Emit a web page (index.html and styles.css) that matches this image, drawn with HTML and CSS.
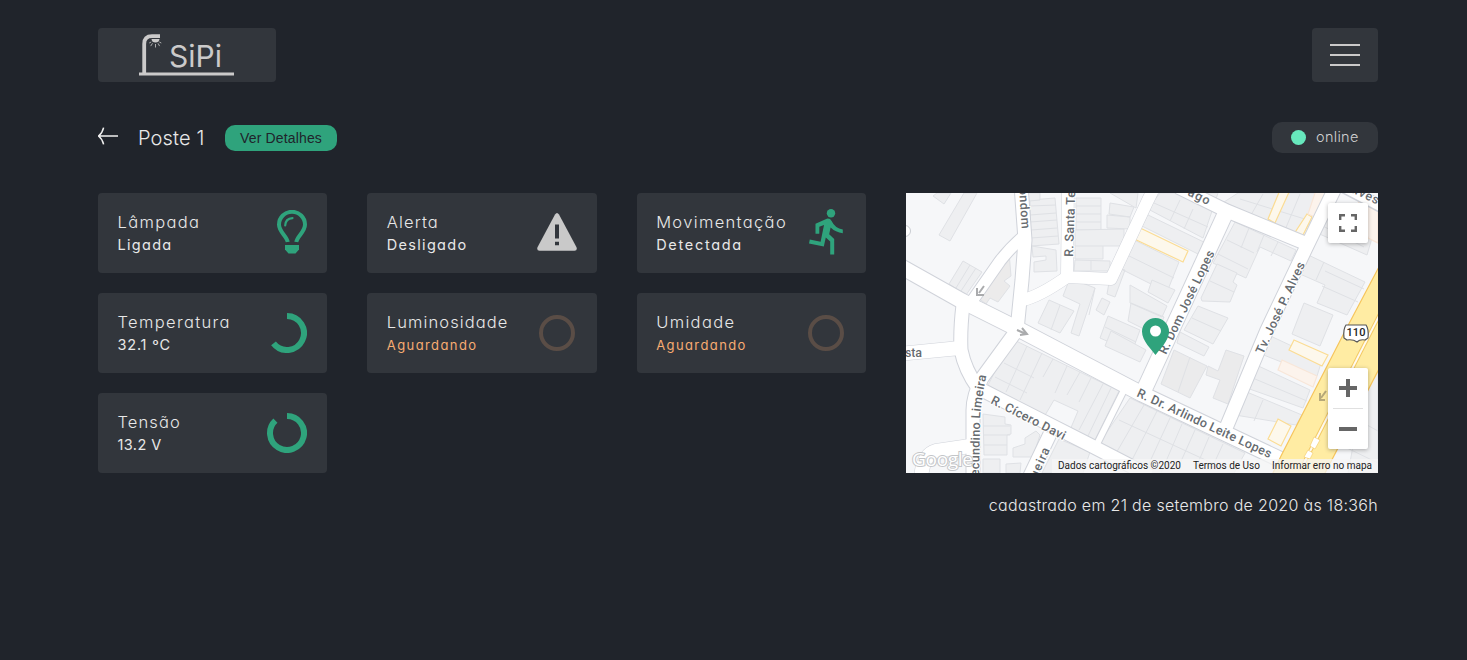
FILE: index.html
```html
<!DOCTYPE html>
<html lang="pt-BR">
<head>
<meta charset="utf-8">
<title>SiPi - Poste 1</title>
<link rel="stylesheet" href="styles.css">
</head>
<body>
<div class="page">
  <header class="header">
    <a class="logo" aria-label="SiPi">
      <svg class="logo-mark" width="96" height="46" viewBox="0 0 96 46">
        <path d="M0 41h95" stroke="#cbcaca" stroke-width="3.2"/>
        <path d="M5.200 41V11Q5.200 3.200 13 3.200H21" fill="none" stroke="#cbcaca" stroke-width="3.800"/>
        <path d="M12.500 6h8q-.3 3.500-4 3.500t-4-3.500z" fill="#cbcaca"/>
        <path d="M12.200 9l-2 1M13.500 10.300l-1.800 2.800M16.500 11v3.500M19 10.300l1.600 2.800M20.300 9l2 1" stroke="#cbcaca" stroke-width=".8"/>
        <text class="logo-text" x="30" y="34" textLength="53" lengthAdjust="spacing">SiPi</text>
      </svg>
    </a>
    <button class="menu" aria-label="Menu"><i></i><i></i><i></i></button>
  </header>

  <div class="titlebar">
    <svg class="back" width="20" height="20" viewBox="0 0 20 20" fill="none" stroke="#f0f0f0" stroke-width="1.500"><path d="M0 10h20M5.600 1.600Q4.400 7 .5 10Q4.400 13 5.600 18.400"/></svg>
    <h1 class="title">Poste 1</h1>
    <button class="details">Ver Detalhes</button>
    <span class="status"><i class="dot"></i><span class="status-text">online</span></span>
  </div>

  <main class="content">
    <section class="cards">
      <article class="card">
        <div><h2 class="name">Lâmpada</h2><p class="value">Ligada</p></div>
        <svg class="bulb" width="30" height="44" viewBox="0 0 30 44"><path d="M10.700 32C9.500 25.500 2 22 2 14.500a13 12.700 0 0 1 26 0C28 22 20.500 25.500 19.300 32" fill="none" stroke="#2fa37c" stroke-width="4"/><path d="M8.200 15.500q.3-6.800 7.300-7.300" fill="none" stroke="#2fa37c" stroke-width="2.200" stroke-linecap="round"/><path d="M8 35h14v4.500L18.500 43.500h-7L8 39.500z" fill="#2fa37c"/></svg>
      </article>
      <article class="card">
        <div><h2 class="name tight">Alerta</h2><p class="value">Desligado</p></div>
        <svg class="alert" width="40" height="38" viewBox="0 0 40 38"><path d="M18 1.600q2-3 4 0l17.500 32.700q1.100 3.200-2 3.500h-35q-3.100-.3-2-3.500z" fill="#c9c9c9"/><path d="M18 11.500h4V25.500h-4zM18 28.700h4v3.600h-4z" fill="#32363c"/></svg>
      </article>
      <article class="card">
        <div><h2 class="name">Movimentação</h2><p class="value wide">Detectada</p></div>
        <svg class="runner" width="34" height="46" viewBox="0 0 34 46" fill="#2fa37c"><circle cx="22" cy="4.300" r="4.200"/><path d="M6.500 14.800L17.800 9.700Q21 9 22.600 12Q26 19.300 33.800 20.400V24.200Q26.500 23.500 21.600 18.600L20.200 25.200L25.200 30V45.500H21.200V32.500L16.800 28.600L14.800 37.600L0 34.600L.8 30.600L11.600 32.800L15 16L10.300 17.800V24.700H6.500z"/></svg>
      </article>
      <article class="card">
        <div><h2 class="name">Temperatura</h2><p class="value num">32.1 ºC</p></div>
        <svg width="40" height="40" viewBox="0 0 40 40"><path d="M20 3A17 17 0 1 1 6.500 30.400" fill="none" stroke="#2fa37c" stroke-width="6"/></svg>
      </article>
      <article class="card">
        <div><h2 class="name tight">Luminosidade</h2><p class="value waiting">Aguardando</p></div>
        <svg width="40" height="40" viewBox="0 0 40 40"><circle cx="20" cy="20" r="16" fill="none" stroke="#5a4d46" stroke-width="4"/></svg>
      </article>
      <article class="card">
        <div><h2 class="name">Umidade</h2><p class="value waiting">Aguardando</p></div>
        <svg width="40" height="40" viewBox="0 0 40 40"><circle cx="20" cy="20" r="16" fill="none" stroke="#5a4d46" stroke-width="4"/></svg>
      </article>
      <article class="card">
        <div><h2 class="name tight">Tensão</h2><p class="value num volts">13.2 V</p></div>
        <svg width="40" height="40" viewBox="0 0 40 40"><path d="M20 3A17 17 0 1 1 8.400 7.600" fill="none" stroke="#2fa37c" stroke-width="6"/></svg>
      </article>
    </section>

    <aside class="side">
      <div class="map">
        <svg class="map-canvas" width="472" height="280" viewBox="906 193 472 280">
          <rect x="906" y="193" width="472" height="280" fill="#f6f7f9"/>
          <defs>
            <g id="roads" fill="none" stroke-linejoin="round">
              <path stroke-width="15" d="M898 265L962 301L1022 331L1142 394L1290 464"/>
              <path stroke-width="13" d="M1021 185L1025 240L1022 280L1017 330L982 378Q973 396 973 410V485"/>
              <path stroke-width="13" d="M963 305Q960 330 961 350Q965 370 978 388L1092 446L1150 476"/>
              <path stroke-width="14" d="M898 354L960 348M970 446L936 451Q922 455 921 480"/>
              <path stroke-width="13" d="M1050 434L1028 480"/>
              <path stroke-width="6" d="M1124 390L1096 446"/>
              <path stroke-width="11" d="M1025 235Q1010 248 1000 261L970 304"/>
              <path stroke-width="12" d="M1068 185L1067 276M1023 300Q1040 296 1067 277L1111 279L1148 200L1155 186"/>
              <path stroke-width="15" d="M1227 210L1145 388"/>
              <path stroke-width="13" d="M1178 187L1227 211L1312 246M1336 186L1306 248L1267 330L1226 428"/>
              <path stroke-width="10" d="M1338 184L1388 210"/>
            </g>
          </defs>

          <!-- buildings -->
          <g fill="#eeeff1" stroke="#dfe1e5" stroke-width="1">
            <path d="M964 193L939 235L950 241L977 193zM933 196L944 204L951 193H937z"/>
            <path d="M949 284L963 261L982 272L966 295zM956 288L970 265M961 291L976 268"/>
            <path d="M977 297L1009 252L1011 276L1004 281L1010 286L998 302L990 298L986 304z" fill="#ecebeb"/>
            <path d="M1030 200L1055 198L1059 244L1031 246zM1030 206L1056 205M1030 215L1056 213M1030 222L1057 220M1031 230L1057 228M1031 238L1058 236M1032 246L1056 250L1057 271L1034 272V262L1046 260V256L1033 257z"/>
            <path d="M1028 193H1040V200L1029 201zM1076 198H1101V230H1076zM1076 206H1101M1076 214H1101M1076 222H1101"/>
            <path d="M1075 230L1124 229V246H1103V259H1075zM1075 246H1103M1075 260L1110 261V271H1074zM1091 260V270M1107 215L1130 217V229L1107 228zM1110 203L1134 207L1130 217L1109 214zM1110 193H1138L1136 208z"/>
            <path d="M1070 278L1095 288L1079 336L1071 333L1080 304L1063 296zM1095 288L1089 315M1049 300L1074 311L1060 333L1038 323zM1060 305L1051 330M1102 298L1110 302L1104 315L1096 310zM1108 316L1140 330L1132 352L1100 338zM1105 327L1136 342"/>
            <path d="M1126 236L1179 262L1167 292L1119 268zM1121 252L1174 278M1146 214L1212 246L1206 258L1140 225zM1160 193H1218L1203 238L1148 209zM1180 200L1170 221M1193 209L1184 229M1154 203L1208 227M1112 266L1125 270L1115 297L1107 294z"/>
            <path d="M1130 285L1167 306L1162 317L1130 303zM1131 303L1164 317L1156 335L1128 321zM1152 280L1175 290L1168 303L1148 292zM1111 331L1146 350L1140 362L1105 346z"/>
            <path d="M1235 222L1296 250L1291 261L1260 247L1246 278L1213 263zM1227 240L1254 253M1249 228L1241 248M1264 235L1257 252M1278 242L1271 256M1218 254L1248 269"/>
            <path d="M1217 264L1237 273L1233 282L1237 285L1230 302L1202 301L1201 298zM1210 281L1234 292M1198 306L1228 318L1213 344L1184 330zM1192 318L1221 331M1180 332L1209 347L1204 356L1177 343z"/>
            <path d="M1238 193H1318L1300 236L1224 202zM1263 194L1251 215M1282 193L1268 225M1300 194L1285 230M1240 199L1308 220"/>
            <path d="M1318 212L1372 238L1367 255L1306 228zM1313 221L1364 247M1302 252L1365 282L1347 315L1317 303L1325 285L1300 274zM1324 262L1316 280M1325 271L1364 289M1322 286L1358 302"/>
            <path d="M1304 303L1333 315L1320 346L1292 334z"/>
            <path d="M1174 350L1207 366L1190 398L1161 384zM1190 357L1178 392M1208 366L1218 371L1226 350L1244 356L1228 404L1213 398L1220 380L1206 375z" fill="#ebebec"/>
            <path d="M1264 333L1322 360L1317 376L1256 352zM1252 363L1310 390L1303 408L1244 387zM1248 376L1307 401M1242 390L1302 415L1296 425L1235 415L1233 418zM1263 400L1254 421"/>
            <path d="M1012 339L1119 391L1094 442L1070 430L1078 411L1054 400L1044 417L988 385zM1027 346L1006 392M1042 353L1020 400M1053 359L1043 377M1067 366L1055 393M1080 372L1067 395M1091 378L1079 402M1103 384L1079 430M1111 388L1087 438M1004 363L1034 378M995 377L1027 393"/>
            <path d="M1130 398L1245 453L1234 473H1150L1098 445zM1144 405L1115 455M1157 411L1132 460M1170 418L1147 468M1182 424L1161 473M1195 430L1178 468M1209 437L1195 470M1223 444L1211 470M1119 420L1225 469"/>
            <path d="M983 414L1005 417V424L1011 425V434L1007 435V455H984zM983 426H1010M984 435H1010M984 445H1007M1036 431L1040 435L1033 457H1013V448L1025 444V438zM983 459H1000V473H983zM1006 464L1021 463L1020 473H1006zM1059 439L1090 452L1083 473H1042z"/>
            <path d="M1370 355L1378 358V473H1348zM1345 447L1378 463M1356 419L1378 431"/>
          </g>
          <g fill="#fdf8ec" stroke="#fbdc93" stroke-width="1.200">
            <path d="M1136 226L1188 251L1183 262L1130 237zM1280 190L1268 219L1275 223L1290 190zM1307 214L1312 217L1302 237L1294 234zM1294 340L1328 355L1322 366L1289 350zM1278 419L1291 426L1281 446L1268 439z"/>
            <path d="M1316 190L1308 214L1317 218L1332 190zM1282 360L1317 376L1313 387L1278 370zM1358 200L1378 208V243L1368 238z" fill="#fcf3ec" stroke="#f8e6d8"/>
          </g>

          <!-- streets: casing below, surface above -->
          <g fill="none" stroke="#d0d3da" stroke-linejoin="round">
            <path stroke-width="17" d="M898 265L962 301L1022 331L1142 394L1290 464M1227 210L1145 388"/>
            <path stroke-width="15" d="M1021 185L1025 240L1022 280L1017 330L982 378Q973 396 973 410V485M963 305Q960 330 961 350Q965 370 978 388L1092 446L1150 476M1050 434L1028 480M898 354L960 348M970 446L936 451Q922 455 921 480M1178 187L1227 211L1312 246M1336 186L1306 248L1267 330L1226 428"/>
            <path stroke-width="13" d="M1025 235Q1010 248 1000 261L970 304M1068 185L1067 276M1023 300Q1040 296 1067 277L1111 279L1148 200L1155 186M1338 184L1388 210"/>
            <path stroke-width="8" d="M1124 390L1096 446"/>
          </g>
          <use href="#roads" stroke="#fff"/>
          <path d="M1380 265L1343 335L1281 456L1272 475H1324L1380 367z" fill="#ffeca3"/>
          <path d="M1380 265L1343 335L1281 456L1272 475M1324 475L1380 367" fill="none" stroke="#f6c55c" stroke-width="1.200"/>
          <path d="M1380 314L1303 465" stroke="#f3c965" stroke-width="4"/><path d="M1380 314L1303 465" stroke="#fffaf0" stroke-width="2"/>
          <path d="M1314 437L1320 440L1315 449L1310 446zM1308 450L1313 453L1310 459L1304 457z" fill="#fff" stroke="#f3c965" stroke-width=".6"/>
          <g fill="none" stroke="#aaabad" stroke-width="2"><path d="M984 286L979 293M977 288V295H984M1017 330L1026 334M1022 328L1027 334L1020 335"/><path d="M1326 391L1321 398M1320 393V400H1325" stroke="#b7a97a"/></g>
          <circle cx="905" cy="231" r="5.500" fill="#fff" stroke="#c9ccd2"/>

          <defs>
            <path id="limeira" d="M979 483L980 425Q980 405 987 373"/>
          </defs>
          <g class="street">
            <text transform="translate(1019 188) rotate(86)" textLength="41">ondom</text>
            <text transform="translate(1073 257) rotate(-88)" textLength="66">R. Santa Te</text>
            <text transform="translate(1166 355) rotate(-64.500)" textLength="113">R. Dom José Lopes</text>
            <text transform="translate(1263 355) rotate(-65)" textLength="100">Tv. José P. Alves</text>
            <text transform="translate(990 403) rotate(27)" textLength="82">R. Cícero Davi</text>
            <text transform="translate(1136 396) rotate(25)" textLength="147">R. Dr. Arlindo Leite Lopes</text>
            <text><textPath href="#limeira" textLength="108">secundino Limeira</textPath></text>
            <text transform="translate(1037 479) rotate(-66)" textLength="32">ueira</text>
            <text x="905" y="357" textLength="17">sta</text>
            <text transform="translate(1187 195) rotate(26)" textLength="23">ago</text>
            <text transform="translate(1346 190) rotate(25)" textLength="34">Alves</text>
          </g>
          <path d="M1346 325H1366Q1369 329 1368 338L1365 340Q1360 339 1357 342Q1353 339 1347 340L1344 338Q1343 329 1346 325z" fill="#fff" stroke="#555" stroke-width="1.200"/>
          <text class="route" x="1346.500" y="336" textLength="19">110</text>
          <path d="M1155.500 355C1152 350 1142 341 1142 331.500a13.500 13.500 0 0 1 27 0C1169 341 1159 350 1155.500 355z" fill="#2fa37c"/>
          <circle cx="1155.500" cy="331" r="5.500" fill="#fff"/>
          <text class="google" x="912" y="466" textLength="61">Google</text>
        </svg>
        <button class="control fullscreen" aria-label="Tela cheia"><svg width="18" height="18" viewBox="0 0 18 18"><path d="M1.200 6V1.200H6M12 1.200h4.800V6M16.800 12v4.800H12M6 16.800H1.200V12" fill="none" stroke="#666" stroke-width="2.400"/></svg></button>
        <div class="control zoom">
          <button class="zoom-btn" aria-label="Aproximar"><svg width="18" height="18" viewBox="0 0 18 18"><path d="M0 9h18M9 0v18" stroke="#666" stroke-width="4"/></svg></button>
          <i class="zoom-line"></i>
          <button class="zoom-btn" aria-label="Afastar"><svg width="18" height="18" viewBox="0 0 18 18"><path d="M0 9h18" stroke="#666" stroke-width="4"/></svg></button>
        </div>
        <div class="credits"><span>Dados cartográficos ©2020</span><span>Termos de Uso</span><span>Informar erro no mapa</span></div>
      </div>
      <p class="registered">cadastrado em 21 de setembro de 2020 às 18:36h</p>
    </aside>
  </main>
</div>
</body>
</html>
```
FILE: styles.css
```css
* { box-sizing: border-box; }
body {
  margin: 0;
  min-height: 660px;
  background: #20242b;
  color: #e8e8e8;
  font-family: Inter, "Liberation Sans", sans-serif;
  font-weight: 300;
  font-feature-settings: "cv11", "ss03";
}
button { border: 0; padding: 0; font: inherit; }
h1, h2, p { margin: 0; font-weight: 300; }
svg { display: block; flex: none; }

.page { width: 1280px; margin-left: 98px; padding-top: 28px; }
.header { display: flex; justify-content: space-between; height: 54px; }
.logo { display: flex; width: 178px; padding: 5px 0 0 41px; border-radius: 4px; background: #32363c; }
.logo-text { font-size: 30px; font-weight: 400; fill: #cbcaca; }
.menu {
  display: flex; flex-direction: column; align-items: center; justify-content: center; gap: 8px;
  width: 66px; border-radius: 4px; background: #32363c;
}
.menu i { width: 30px; height: 2px; background: #cbcaca; }

.titlebar { display: flex; align-items: center; height: 31px; margin-top: 40px; }
.back { margin-bottom: 3px; }
.title { width: 67px; margin-left: 20px; font-size: 20px; line-height: 30px; letter-spacing: 0.15px; white-space: nowrap; }
.details {
  width: 112px; height: 26px; margin-left: 20px; border-radius: 10px;
  background: #2fa37c; color: #20242b;
  font: 400 14px/26px "Liberation Sans", Arial, sans-serif; letter-spacing: 0.15px;
}
.status {
  display: flex; align-items: center; gap: 10px; width: 106px; height: 31px;
  margin-left: auto; padding-left: 19px; border-radius: 10px; background: #32363c;
}
.dot { width: 15px; height: 15px; border-radius: 50%; background: #67e8bd; }
.status-text { margin-top: -2px; font-size: 14.5px; letter-spacing: 0.3px; color: #d0d0d0; }

.content { display: grid; grid-template-columns: 768px 472px; gap: 40px; margin-top: 40px; }
.cards { display: grid; grid-template-columns: repeat(3, 1fr); grid-auto-rows: 80px; gap: 20px 40px; align-content: start; }
.card {
  display: flex; align-items: center; justify-content: space-between;
  padding: 0 20px 0 19.5px; border-radius: 4px; background: #32363c;
}
.card > div { height: 45px; margin-top: -2px; }
.bulb { margin-top: -3px; }
.alert { margin-top: -3px; }
.runner { margin: -3px 3px 0 0; }
.name { font-size: 16.5px; line-height: 24px; letter-spacing: 1.35px; white-space: nowrap; }
.tight { letter-spacing: 1.1px; }
.value { font-size: 14.5px; line-height: 21px; letter-spacing: 1.3px; font-weight: 400; }
.wide { letter-spacing: 1.7px; }
.num { letter-spacing: 0.8px; }
.volts { letter-spacing: 0.4px; }
.waiting { font-size: 13px; line-height: 22px; letter-spacing: 1.4px; color: #f8ac72; }

.map { position: relative; height: 280px; overflow: hidden; }
.street { font: 500 12.5px Roboto, sans-serif; fill: #666b70; stroke: #fff; stroke-width: 2px; paint-order: stroke; }
.route { font: 500 11px Roboto, sans-serif; fill: #222; }
.google { font: 500 19px "Open Sans", sans-serif; fill: #fff; stroke: #c3c5c8; stroke-width: 2px; paint-order: stroke; }
.control { position: absolute; right: 10px; width: 40px; border-radius: 2px; background: #fff; box-shadow: 0 1px 4px rgba(0, 0, 0, 0.3); }
.fullscreen { top: 10px; height: 40px; display: grid; place-items: center; }
.zoom { top: 175px; height: 81px; }
.zoom-btn { display: grid; place-items: center; width: 40px; height: 40px; background: none; }
.zoom-line { display: block; width: 30px; height: 1px; margin: 0 auto; background: #e0e0e0; }
.credits {
  position: absolute; right: 0; bottom: 0; display: flex; gap: 12px; height: 14px; padding: 0 6px;
  background: rgba(245, 245, 245, 0.75); color: #222;
  font: 400 10px/14px Roboto, sans-serif; white-space: nowrap;
}
.registered { margin-top: 20px; font-size: 16px; line-height: 24px; text-align: right; letter-spacing: 0.31px; white-space: nowrap; }
```
